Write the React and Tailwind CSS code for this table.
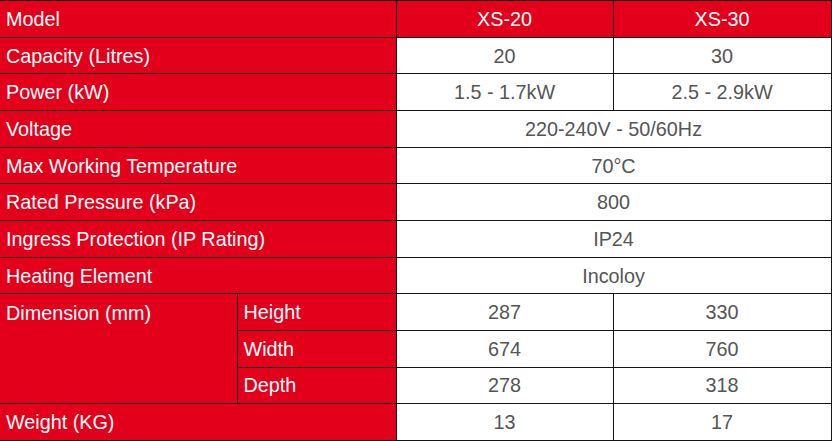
const RED = 'bg-[#e3001b]'

const ROWS = [
  { label: 'Capacity (Litres)', values: ['20', '30'] },
  { label: 'Power (kW)', values: ['1.5 - 1.7kW', '2.5 - 2.9kW'] },
  { label: 'Voltage', span: '220-240V - 50/60Hz' },
  { label: 'Max Working Temperature', span: '70°C' },
  { label: 'Rated Pressure (kPa)', span: '800' },
  { label: 'Ingress Protection (IP Rating)', span: 'IP24' },
  { label: 'Heating Element', span: 'Incoloy' },
]

const DIMENSIONS = [
  { label: 'Height', values: ['287', '330'] },
  { label: 'Width', values: ['674', '760'] },
  { label: 'Depth', values: ['278', '318'] },
]

const cell = 'border-[1.5px] border-[#141414] h-[36.67px] p-0 pt-[2px]'
const head = `${cell} ${RED} text-white text-left pl-[6px] font-normal`
const val = `${cell} bg-white text-[#555555] text-center`

export default function App() {
  return (
    <div className="w-[832px] h-[441px] bg-white overflow-hidden">
      <table
        className="table-fixed border-collapse w-[831px] h-[441px] text-[19.8px] leading-none"
        style={{ fontFamily: '"Liberation Sans", Arial, sans-serif' }}
      >
        <colgroup>
          <col className="w-[237px]" />
          <col className="w-[159px]" />
          <col className="w-[217px]" />
          <col className="w-[218px]" />
        </colgroup>
        <tbody>
          <tr>
            <th colSpan={2} className={`${head} border-l-0`}>Model</th>
            <th className={`${cell} ${RED} text-white font-normal text-center`}>XS-20</th>
            <th className={`${cell} ${RED} text-white font-normal text-center`}>XS-30</th>
          </tr>
          {ROWS.map((row) => (
            <tr key={row.label}>
              <th colSpan={2} className={`${head} border-l-0`}>{row.label}</th>
              {row.span ? (
                <td colSpan={2} className={val}>{row.span}</td>
              ) : (
                row.values.map((v) => (
                  <td key={v} className={val}>{v}</td>
                ))
              )}
            </tr>
          ))}
          {DIMENSIONS.map((row, i) => (
            <tr key={row.label}>
              {i === 0 && (
                <th rowSpan={3} className={`${head} border-l-0 align-top pt-[10px]`}>
                  Dimension (mm)
                </th>
              )}
              <th className={head}>{row.label}</th>
              {row.values.map((v) => (
                <td key={v} className={val}>{v}</td>
              ))}
            </tr>
          ))}
          <tr>
            <th colSpan={2} className={`${head} border-l-0`}>Weight (KG)</th>
            <td className={val}>13</td>
            <td className={val}>17</td>
          </tr>
        </tbody>
      </table>
    </div>
  )
}
